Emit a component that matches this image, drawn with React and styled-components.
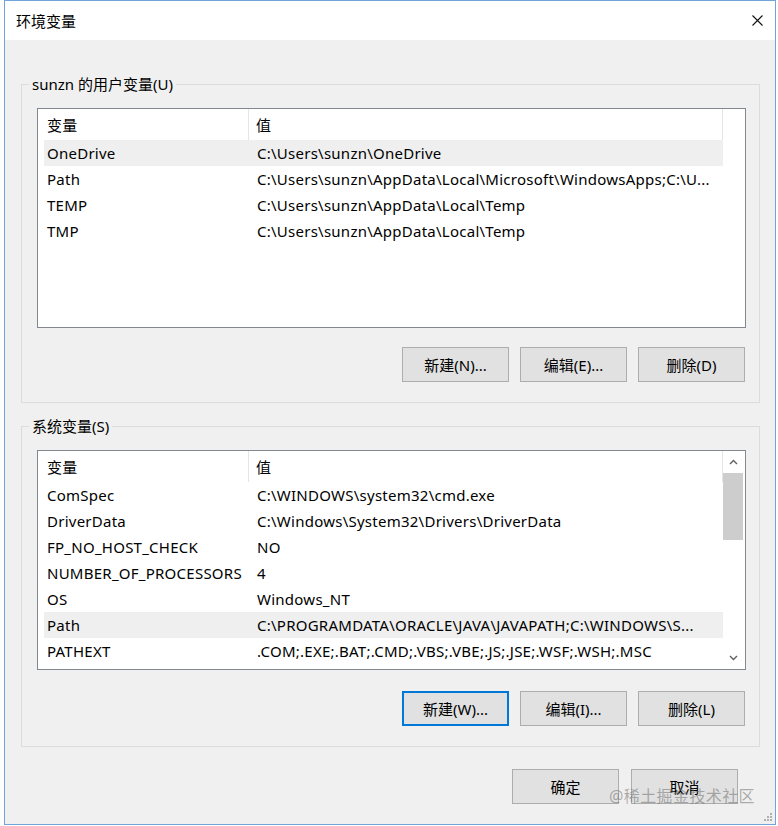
import React from 'react'
import styled, { createGlobalStyle } from 'styled-components';

const Global = createGlobalStyle`
   body {
      margin: 0;
      background: #fff;
      font-family: "Noto Sans", "Noto Sans CJK SC", sans-serif;
      font-size: 15px;
      color: #000;
   }
`

const Window = styled.div`
   position: relative;
   box-sizing: border-box;
   margin-left: 4px;
   width: 772px;
   height: 825px;
   border: 1px solid #72a3db;
   background: #f0f0f0;
   display: flex;
   flex-direction: column;
`

const TitleBar = styled.div`
   height: 39px;
   flex: none;
   background: #fff;
   display: flex;
   align-items: center;
   justify-content: space-between;
   padding: 0 12px 0 11px;
`

const Title = styled.span`
   font-size: 15px;
   line-height: 20px;
`

const Body = styled.div`
   padding: 34px 15px 0 16px;
   display: flex;
   flex-direction: column;
`

const Group = styled.fieldset`
   margin: ${({ first }) => (first ? '0' : '13px 0 0')};
   padding: 14px 13px 20px 15px;
   border: 1px solid #dcdcdc;
   min-width: 0;
`

const Legend = styled.legend`
   margin-left: -8px;
   padding: 0 3px;
   line-height: 20px;
`

const ListBox = styled.div`
   height: 220px;
   box-sizing: border-box;
   border: 1px solid #828790;
   background: #fff;
   display: flex;
   letter-spacing: 0.25px;
`

const Table = styled.div`
   width: 685px;
   flex: none;
`

const HeaderRow = styled.div`
   display: grid;
   grid-template-columns: 211px 474px;
   height: 31px;
`

const HeaderCell = styled.div`
   border-right: 1px solid #e5e5e5;
   padding-left: ${({ pad }) => pad}px;
   display: flex;
   align-items: center;
`

const Row = styled.div`
   margin-left: 6px;
   height: 26px;
   display: grid;
   grid-template-columns: 210px 469px;
   align-items: center;
   background: ${({ selected }) => (selected ? '#efefef' : 'transparent')};
`

const Cell = styled.div`
   padding: 0 3px;
   white-space: nowrap;
   overflow: hidden;
`

const ScrollBar = styled.div`
   flex: 1;
   display: flex;
   flex-direction: column;
   padding-right: 2px;
`

const ArrowBtn = styled.div`
   height: 22px;
   display: flex;
   align-items: center;
   justify-content: center;
   color: #606060;
`

const Thumb = styled.div`
   height: 67px;
   background: #cdcdcd;
`

const Track = styled.div`
   flex: 1;
`

const ButtonRow = styled.div`
   display: flex;
   justify-content: flex-end;
   gap: 11px;
   padding-right: 1px;
   margin-top: ${({ top }) => top}px;
`

const Button = styled.button`
   box-sizing: border-box;
   width: 107px;
   height: 35px;
   padding: 0;
   font-family: inherit;
   font-size: 15px;
   color: #000;
   background: #e1e1e1;
   border: ${({ focused }) => (focused ? '2px solid #0078d7' : '1px solid #adadad')};
`

const Footer = styled.div`
   display: flex;
   justify-content: flex-end;
   gap: 12px;
   margin-top: 22px;
   padding-right: 22px;
`

const Watermark = styled.div`
   position: absolute;
   right: 20px;
   top: 782px;
   font-size: 16px;
   color: rgba(110, 110, 110, 0.55);
   letter-spacing: 0.4px;
   pointer-events: none;
`

const Grip = styled.svg`
   position: absolute;
   right: 3px;
   bottom: 3px;
`

const userVars = [
   ['OneDrive', 'C:\\Users\\sunzn\\OneDrive', true],
   ['Path', 'C:\\Users\\sunzn\\AppData\\Local\\Microsoft\\WindowsApps;C:\\U...'],
   ['TEMP', 'C:\\Users\\sunzn\\AppData\\Local\\Temp'],
   ['TMP', 'C:\\Users\\sunzn\\AppData\\Local\\Temp'],
]

const sysVars = [
   ['ComSpec', 'C:\\WINDOWS\\system32\\cmd.exe'],
   ['DriverData', 'C:\\Windows\\System32\\Drivers\\DriverData'],
   ['FP_NO_HOST_CHECK', 'NO'],
   ['NUMBER_OF_PROCESSORS', '4'],
   ['OS', 'Windows_NT'],
   ['Path', 'C:\\PROGRAMDATA\\ORACLE\\JAVA\\JAVAPATH;C:\\WINDOWS\\S...', true],
   ['PATHEXT', '.COM;.EXE;.BAT;.CMD;.VBS;.VBE;.JS;.JSE;.WSF;.WSH;.MSC'],
]

const VarList = ({ rows, scroll }) => (
   <ListBox>
      <Table>
         <HeaderRow>
            <HeaderCell pad={9}>变量</HeaderCell>
            <HeaderCell pad={7}>值</HeaderCell>
         </HeaderRow>
         {rows.map(([name, value, selected]) => (
            <Row key={name} selected={selected}>
               <Cell>{name}</Cell>
               <Cell>{value}</Cell>
            </Row>
         ))}
      </Table>
      {scroll && (
         <ScrollBar>
            <ArrowBtn>
               <svg width="9" height="6" viewBox="0 0 9 6"><path d="M1 5 L4.5 1.5 L8 5" fill="none" stroke="currentColor" strokeWidth="1.4" /></svg>
            </ArrowBtn>
            <Thumb />
            <Track />
            <ArrowBtn>
               <svg width="9" height="6" viewBox="0 0 9 6"><path d="M1 1 L4.5 4.5 L8 1" fill="none" stroke="currentColor" strokeWidth="1.4" /></svg>
            </ArrowBtn>
         </ScrollBar>
      )}
   </ListBox>
)

const EnvDialog = () => {
   return (
      <>
         <Global />
         <Window>
            <TitleBar>
               <Title>环境变量</Title>
               <svg width="11" height="11" viewBox="0 0 11 11">
                  <path d="M0.5 0.5 L10.5 10.5 M10.5 0.5 L0.5 10.5" stroke="#111" strokeWidth="1.1" />
               </svg>
            </TitleBar>
            <Body>
               <Group first>
                  <Legend>sunzn 的用户变量(U)</Legend>
                  <VarList rows={userVars} />
                  <ButtonRow top={19}>
                     <Button>新建(N)...</Button>
                     <Button>编辑(E)...</Button>
                     <Button>删除(D)</Button>
                  </ButtonRow>
               </Group>
               <Group>
                  <Legend>系统变量(S)</Legend>
                  <VarList rows={sysVars} scroll />
                  <ButtonRow top={21}>
                     <Button focused>新建(W)...</Button>
                     <Button>编辑(I)...</Button>
                     <Button>删除(L)</Button>
                  </ButtonRow>
               </Group>
               <Footer>
                  <Button>确定</Button>
                  <Button>取消</Button>
               </Footer>
            </Body>
            <Watermark>@稀土掘金技术社区</Watermark>
            <Grip width="8" height="8" viewBox="0 0 8 8">
               <g fill="#b0b0b0">
                  <rect x="6" y="0" width="2" height="2" />
                  <rect x="3" y="3" width="2" height="2" />
                  <rect x="6" y="3" width="2" height="2" />
                  <rect x="0" y="6" width="2" height="2" />
                  <rect x="3" y="6" width="2" height="2" />
                  <rect x="6" y="6" width="2" height="2" />
               </g>
            </Grip>
         </Window>
      </>
   )
}

export default EnvDialog
